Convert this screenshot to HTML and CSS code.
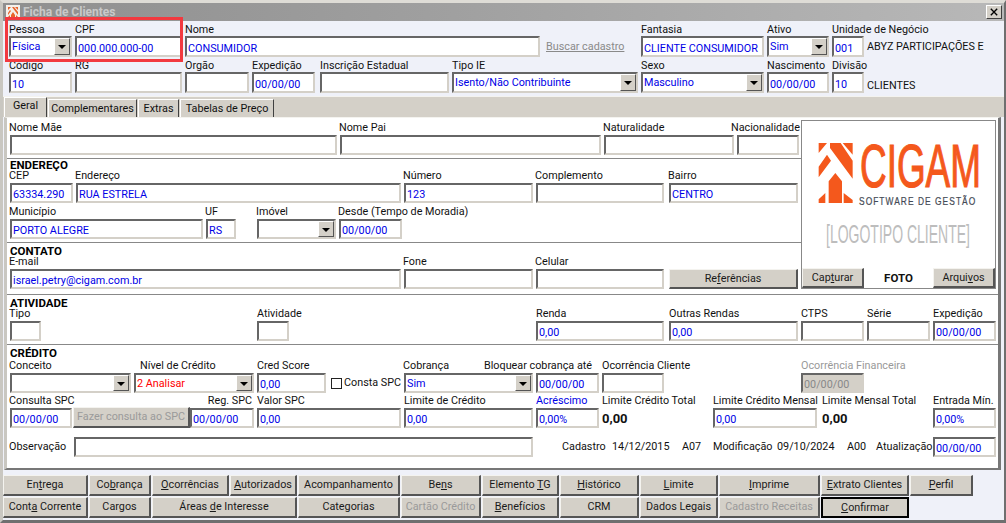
FILE: index.html
```html
<!DOCTYPE html>
<html lang="pt-BR">
<head>
<meta charset="utf-8">
<title>Ficha de Clientes</title>
<link rel="stylesheet" href="styles.css">
</head>
<body>
<div class="window">
  <div class="titlebar">
    <svg class="appicon" viewBox="0 0 14 14"><rect width="14" height="14" fill="#f4f0ea"/><path d="M2 2h3L2 5zM6 2h2l4 5v3zM9 2h3v3zM4 5l1 1-3 4V8zM7 7l2 3v2H5v-2zM2 12l2-2v2zM10 10l2 2h-2z" fill="#e8622a"/></svg>
    <span class="titletext">Ficha de Clientes</span>
    <span class="closebtn"><svg viewBox="0 0 10 10"><path d="M1 1l8 8M9 1l-8 8" stroke="#000" stroke-width="1.7"/></svg></span>
  </div>

  <div class="head">
    <div class="row h1">
      <div class="fld"><label class="lbl">Pessoa</label><div class="ctl combo"><span>Física</span><b class="arrow"></b></div></div>
      <div class="fld"><label class="lbl">CPF</label><input class="ctl" value="000.000.000-00"></div>
      <div class="fld"><label class="lbl">Nome</label><input class="ctl" value="CONSUMIDOR"></div>
      <a class="busca">Buscar cadastro</a>
      <div class="fld"><label class="lbl">Fantasia</label><input class="ctl" value="CLIENTE CONSUMIDOR"></div>
      <div class="fld"><label class="lbl">Ativo</label><div class="ctl combo"><span>Sim</span><b class="arrow"></b></div></div>
      <div class="fld"><label class="lbl">Unidade de Negócio</label><input class="ctl" value="001"></div>
      <span class="note">ABYZ PARTICIPAÇÕES E</span>
    </div>
    <div class="row h2">
      <div class="fld"><label class="lbl">Código</label><input class="ctl" value="10"></div>
      <div class="fld"><label class="lbl">RG</label><input class="ctl"></div>
      <div class="fld"><label class="lbl">Orgão</label><input class="ctl"></div>
      <div class="fld p5"><label class="lbl">Expedição</label><input class="ctl" value="00/00/00"></div>
      <div class="fld"><label class="lbl">Inscrição Estadual</label><input class="ctl"></div>
      <div class="fld"><label class="lbl">Tipo IE</label><div class="ctl combo"><span>Isento/Não Contribuinte</span><b class="arrow"></b></div></div>
      <div class="fld"><label class="lbl">Sexo</label><div class="ctl combo"><span>Masculino</span><b class="arrow"></b></div></div>
      <div class="fld"><label class="lbl">Nascimento</label><input class="ctl" value="00/00/00"></div>
      <div class="fld"><label class="lbl">Divisão</label><input class="ctl" value="10"></div>
      <span class="note low">CLIENTES</span>
    </div>
  </div>

  <div class="tabbar">
    <span class="tab active">Geral</span>
    <span class="tab t-comp">Complementares</span>
    <span class="tab t-ext">Extras</span>
    <span class="tab t-tab">Tabelas de Preço</span>
  </div>

  <div class="page">
    <div class="upper">
      <div class="upper-left">
        <section class="sec s-mae">
          <div class="row mae">
            <div class="fld"><label class="lbl">Nome Mãe</label><input class="ctl"></div>
            <div class="fld"><label class="lbl">Nome Pai</label><input class="ctl"></div>
            <div class="fld"><label class="lbl">Naturalidade</label><input class="ctl"></div>
            <div class="fld"><label class="lbl nac">Nacionalidade</label><input class="ctl"></div>
          </div>
        </section>
        <section class="sec s-end">
          <h2 class="sect">ENDEREÇO</h2>
          <div class="row e1">
            <div class="fld"><label class="lbl">CEP</label><input class="ctl" value="63334.290"></div>
            <div class="fld"><label class="lbl">Endereço</label><input class="ctl" value="RUA ESTRELA"></div>
            <div class="fld"><label class="lbl">Número</label><input class="ctl" value="123"></div>
            <div class="fld p5"><label class="lbl">Complemento</label><input class="ctl"></div>
            <div class="fld"><label class="lbl">Bairro</label><input class="ctl" value="CENTRO"></div>
          </div>
          <div class="row e2">
            <div class="fld"><label class="lbl">Município</label><input class="ctl" value="PORTO ALEGRE"></div>
            <div class="fld p21"><label class="lbl">UF</label><input class="ctl" value="RS"></div>
            <div class="fld"><label class="lbl">Imóvel</label><div class="ctl combo"><span></span><b class="arrow"></b></div></div>
            <div class="fld"><label class="lbl">Desde (Tempo de Moradia)</label><input class="ctl" value="00/00/00"></div>
          </div>
        </section>
        <section class="sec s-con">
          <h2 class="sect">CONTATO</h2>
          <div class="row c1">
            <div class="fld"><label class="lbl">E-mail</label><input class="ctl" value="israel.petry@cigam.com.br"></div>
            <div class="fld"><label class="lbl">Fone</label><input class="ctl"></div>
            <div class="fld p5"><label class="lbl">Celular</label><input class="ctl"></div>
            <button class="btn refs">Re<u>f</u>erências</button>
          </div>
        </section>
      </div>
      <aside class="photo">
        <svg class="logo" viewBox="0 0 193 147">
          <g transform="translate(10 17) scale(.3333)" fill="#f4581c">
            <path d="M20 15H45L20 45zM54 15H86L122 68V122L54 30zM92 15H122V50zM45 50L57 68 20 118V86zM70 105L90 130V195H50V130zM20 195V184L40 165V195zM95 165L122 186V195H95z"/>
          </g>
          <text class="lg-cigam" transform="translate(58 66) scale(.605 1)">CIGAM</text>
          <text class="lg-soft" transform="translate(57 84) scale(.8 1)">SOFTWARE DE GESTÃO</text>
          <text class="lg-cli" transform="translate(24 122) scale(.539 1)">[LOGOTIPO CLIENTE]</text>
        </svg>
        <div class="photobar">
          <button class="btn">Cap<u>t</u>urar</button>
          <b class="foto">FOTO</b>
          <button class="btn">Arqui<u>v</u>os</button>
        </div>
      </aside>
    </div>

    <section class="sec s-ati">
      <h2 class="sect">ATIVIDADE</h2>
      <div class="row a1">
        <div class="fld"><label class="lbl">Tipo</label><input class="ctl w31"></div>
        <div class="fld"><label class="lbl">Atividade</label><input class="ctl w32"></div>
        <div class="fld p5"><label class="lbl">Renda</label><input class="ctl" value="0,00"></div>
        <div class="fld"><label class="lbl">Outras Rendas</label><input class="ctl" value="0,00"></div>
        <div class="fld"><label class="lbl">CTPS</label><input class="ctl"></div>
        <div class="fld"><label class="lbl">Série</label><input class="ctl"></div>
        <div class="fld"><label class="lbl">Expedição</label><input class="ctl" value="00/00/00"></div>
      </div>
    </section>

    <section class="sec s-cre">
      <h2 class="sect">CRÉDITO</h2>
      <div class="row k1">
        <div class="fld"><label class="lbl">Conceito</label><div class="ctl combo"><span></span><b class="arrow"></b></div></div>
        <div class="fld"><label class="lbl ind">Nível de Crédito</label><div class="ctl combo red"><span>2 Analisar</span><b class="arrow"></b></div></div>
        <div class="fld"><label class="lbl">Cred Score</label><input class="ctl" value="0,00"></div>
        <div class="checkline"><i class="check"></i><span>Consta SPC</span></div>
        <div class="fld"><label class="lbl">Cobrança</label><div class="ctl combo"><span>Sim</span><b class="arrow"></b></div></div>
        <div class="fld"><label class="lbl blq">Bloquear cobrança até</label><input class="ctl" value="00/00/00"></div>
        <div class="fld"><label class="lbl">Ocorrência Cliente</label><input class="ctl w62"></div>
        <div class="fld off"><label class="lbl">Ocorrência Financeira</label><input class="ctl" value="00/00/00"></div>
      </div>
      <div class="row k2">
        <div class="fld p1"><label class="lbl">Consulta SPC</label><input class="ctl" value="00/00/00"></div>
        <button class="btn spc" disabled>Fazer consulta ao SPC</button>
        <div class="fld"><label class="lbl right">Reg. SPC</label><input class="ctl" value="00/00/00"></div>
        <div class="fld"><label class="lbl">Valor SPC</label><input class="ctl" value="0,00"></div>
        <div class="fld"><label class="lbl">Limite de Crédito</label><input class="ctl" value="0,00"></div>
        <div class="fld"><label class="lbl acr">Acréscimo</label><input class="ctl" value="0,00%"></div>
        <div class="fld"><label class="lbl">Limite Crédito Total</label><b class="val">0,00</b></div>
        <div class="fld p5"><label class="lbl">Limite Crédito Mensal</label><input class="ctl" value="0,00"></div>
        <div class="fld"><label class="lbl">Limite Mensal Total</label><b class="val">0,00</b></div>
        <div class="fld"><label class="lbl">Entrada Mín.</label><input class="ctl" value="0,00%"></div>
      </div>
      <div class="row k3">
        <span class="txt obs">Observação</span>
        <div class="fld"><input class="ctl"></div>
        <span class="txt cad">Cadastro</span>
        <span class="txt">14/12/2015</span>
        <span class="txt">A07</span>
        <span class="txt">Modificação</span>
        <span class="txt">09/10/2024</span>
        <span class="txt">A00</span>
        <span class="txt">Atualização</span>
        <input class="ctl" value="00/00/00">
      </div>
    </section>
  </div>

  <div class="actions">
    <button class="btn">En<u>t</u>rega</button>
    <button class="btn">Co<u>b</u>rança</button>
    <button class="btn"><u>O</u>corrências</button>
    <button class="btn"><u>A</u>utorizados</button>
    <button class="btn">Acompanhamento</button>
    <button class="btn">Be<u>n</u>s</button>
    <button class="btn">Elemento <u>T</u>G</button>
    <button class="btn"><u>H</u>istórico</button>
    <button class="btn"><u>L</u>imite</button>
    <button class="btn"><u>I</u>mprime</button>
    <button class="btn"><u>E</u>xtrato Clientes</button>
    <button class="btn"><u>P</u>erfil</button>
    <button class="btn">Cont<u>a</u> Corrente</button>
    <button class="btn">Cargos</button>
    <button class="btn span2">Áreas <u>d</u>e Interesse</button>
    <button class="btn">Categorias</button>
    <button class="btn" disabled>Cartão Crédito</button>
    <button class="btn"><u>B</u>enefícios</button>
    <button class="btn">CRM</button>
    <button class="btn">Dados Le<u>g</u>ais</button>
    <button class="btn" disabled>Cadastro Receitas</button>
    <button class="btn default"><u>C</u>onfirmar</button>
  </div>

  <div class="highlight"></div>
</div>
</body>
</html>
```

FILE: styles.css
```css
* { box-sizing: border-box; }
html, body { margin: 0; padding: 0; }
body { font: 10.8px/14px Roboto, "Liberation Sans", Arial, sans-serif; color: #111; background: #eef0f8; }

.window {
  position: relative;
  width: 1006px;
  height: 523px;
  overflow: hidden;
  display: flex;
  flex-direction: column;
  background: #eff1f9;
  border-style: solid;
  border-width: 3px 2px 3px 3px;
  border-color: #dedcd6 #6f6f6f #6f6f6f #c9c7c1;
}

.titlebar {
  flex: none;
  height: 18px;
  display: flex;
  align-items: center;
  padding: 0 1px 0 3px;
  background: linear-gradient(90deg, #8f8f8f, #a0a0a0 45%, #b8b8b8);
}
.appicon { width: 14px; height: 14px; margin-right: 3px; }
.titletext { font-weight: bold; font-size: 12px; color: #c9c9c9; }
.closebtn {
  margin-left: auto;
  margin-right: 1px;
  width: 16px;
  height: 14px;
  padding: 2px 3px;
  background: #d4d0c8;
  border: 1px solid;
  border-color: #fff #404040 #404040 #fff;
  display: flex;
}

.row { display: grid; }
.fld { display: flex; flex-direction: column; min-width: 0; padding-right: 3px; }
.p1 { padding-right: 1px; }
.p5 { padding-right: 5px; }
.p21 { padding-right: 21px; }
.lbl { height: 15px; line-height: 17px; white-space: nowrap; }

.ctl {
  display: block;
  width: 100%;
  height: 21px;
  margin: 0;
  padding: 3px 1px 0;
  font: inherit;
  color: #0000e6;
  background: #fff;
  border: 2px solid;
  border-color: #666 #d4d0c8 #d4d0c8 #666;
  border-radius: 0;
  outline: none;
}
.w31 { width: 31px; }
.w32 { width: 32px; }
.w62 { width: 62px; }

.combo { position: relative; padding-top: 1px; padding-left: 1px; line-height: 15px; white-space: nowrap; overflow: hidden; }
.combo.red { color: #f00; }
.arrow {
  position: absolute;
  top: 0;
  right: 0;
  width: 16px;
  height: 17px;
  background: #d4d0c8;
  border: 1px solid;
  border-color: #fff #555 #555 #fff;
}
.arrow::after {
  content: "";
  position: absolute;
  left: 3px;
  top: 6px;
  border: 4px solid transparent;
  border-top: 4px solid #000;
  border-bottom: 0;
}

.head { flex: none; height: 75px; padding-left: 6px; }
.h1 { grid-template-columns: 66px 110px 358px 98px 126px 65px 35px 1fr; }
.h2 { grid-template-columns: 66px 110px 67px 68px 132px 189px 126px 65px 35px 1fr; }
.busca { align-self: end; padding: 0 0 3px 3px; color: #8a8a8a; text-decoration: underline; white-space: nowrap; }
.note { align-self: end; padding-bottom: 3px; white-space: nowrap; }
.note.low { padding-bottom: 0; }

.tabbar {
  flex: none;
  height: 21px;
  position: relative;
  display: flex;
  align-items: flex-end;
  padding-left: 1px;
  background: #d4d0c8;
  border-top: 1px solid #f4f3ef;
}
.tab {
  height: 18px;
  line-height: 17px;
  text-align: center;
  background: #d4d0c8;
  border: 1px solid;
  border-color: #fff #404040 transparent #fff;
  border-bottom: 0;
  white-space: nowrap;
}
.tab.active { width: 43px; height: 20px; background: #d4d0c8; line-height: 16px; }
.t-comp { width: 89px; margin-left: 1px; }
.t-ext { width: 41px; margin-left: 1px; }
.t-tab { width: 94px; margin-left: 1px; }

.page {
  flex: none;
  height: 353px;
  margin-left: 1px;
  margin-right: 3px;
  background: #fff;
  border-style: solid;
  border-width: 1px 3px 2px 3px;
  border-color: #f4f3ef #777 #777 #c9c7c1;
}
.upper { display: flex; height: 176px; }
.upper-left { width: 794px; }
.sec { padding-left: 3px; }
.sec .lbl { margin-left: -1px; line-height: 15px; }
.a1 .fld + .fld .lbl, .k1 .fld + .fld .lbl, .k2 .fld + .fld .lbl { margin-left: 0; }
.sec .ctl { height: 20px; }
.sec .ctl.combo { height: 20px; }
.sec .arrow { height: 16px; }
.sect {
  margin: 0;
  font-size: 11.5px;
  font-weight: bold;
  line-height: 12px;
  color: #000;
  white-space: nowrap;
}
.s-mae { height: 40px; padding-top: 2px; }
.s-end { height: 84px; border-top: 1px solid #888; }
.s-end .sect { height: 9px; margin-top: 0; }
.s-con { height: 52px; border-top: 1px solid #888; }
.s-con .sect { height: 9px; margin-top: 2px; }
.s-ati { height: 50px; border-top: 1px solid #888; }
.s-ati .sect { height: 9px; margin-top: 2px; }
.s-cre { border-top: 1px solid #888; }
.s-cre .sect { height: 11px; margin-top: 2px; }

.mae { grid-template-columns: 330px 264px 133px 65px; }
.nac { margin-left: -6px !important; }
.e1 { grid-template-columns: 66px 328px 132px 133px 132px; }
.e2 { margin-top: 1px; grid-template-columns: 196px 51px 82px 66px; }
.c1 { grid-template-columns: 394px 132px 133px 129px; }
.c1 .btn { align-self: end; height: 20px; }
.a1 { grid-template-columns: 247px 279px 133px 132px 66px 66px 63px; }
.a1 .fld:last-child, .k1 .fld:last-child, .k2 .fld:last-child { padding-right: 0; }

.k1 { grid-template-columns: 124px 123px 72px 75px 132px 66px 199px 63px; }
.ind { margin-left: 6px !important; }
.blq { margin-left: -52px !important; }
.checkline { display: flex; align-items: center; align-self: end; height: 20px; padding-left: 2px; white-space: nowrap; }
.check { flex: none; width: 11px; height: 11px; margin-right: 2px; border: 1px solid #222; background: #fff; }
.off .lbl { color: #999; }
.off .ctl { background: #d4d0c8; color: #888; }
.k2 { grid-template-columns: 63px 117px 67px 147px 132px 66px 111px 109px 111px 63px; }
.k2 > .btn { align-self: end; height: 21px; margin-right: 2px; }
.k2 .ctl { height: 20px; }
.right { text-align: right; margin-right: 2px; margin-left: -30px !important; }
.acr { color: #0000e6; }
.val { padding-top: 4px; font-size: 13px; color: #111; }
.k3 { margin-top: 9px; grid-template-columns: 64px 462px 76px 70px 31px 64px 70px 29px 57px 63px; align-items: center; }
.k3 .fld { padding-right: 3px; }
.txt { white-space: nowrap; }
.obs { margin-left: -1px; }
.cad { padding-left: 26px; }

.photo {
  width: 195px;
  height: 169px;
  margin-top: 2px;
  display: flex;
  flex-direction: column;
  background: #fff;
  border: 1px solid #888;
  flex: none;
}
.logo { width: 193px; height: 147px; display: block; }
.lg-cigam { font: 61px "Liberation Sans", sans-serif; fill: #f4581c; stroke: #f4581c; stroke-width: 1.2px; }
.lg-soft { font: 10.5px "Liberation Sans", sans-serif; letter-spacing: 1.3px; fill: #444a55; stroke: #444a55; stroke-width: .2px; }
.lg-cli { font: 26px "Liberation Sans", sans-serif; fill: #bdbdbd; }
.photobar { margin-top: auto; height: 20px; display: grid; grid-template-columns: 62px 1fr 62px; }
.foto { text-align: center; line-height: 20px; font-size: 11.5px; }

.btn {
  display: block;
  width: 100%;
  margin: 0;
  padding: 0;
  font: inherit;
  color: #1a1a1a;
  white-space: nowrap;
  background: #d4d0c8;
  border: 1px solid;
  border-width: 1px 2px 2px 1px;
  border-color: #f4f3ef #555 #555 #f4f3ef;
  border-radius: 0;
}
.btn:disabled { color: #9a9a9a; }
.btn.default { border: 2px solid #000; }

.actions {
  flex: none;
  margin-top: 5px;
  display: grid;
  grid-template-columns: 85px 62px 77px 67px 102px 80px 77px 79px 78px 101px 88px 63px;
  grid-auto-rows: 21px;
  column-gap: 1px;
  row-gap: 1px;
}
.span2 { grid-column: span 2; }

.highlight {
  position: absolute;
  left: 2px;
  top: 14px;
  width: 178px;
  height: 45px;
  border: 3px solid #f2393f;
  pointer-events: none;
}
```
